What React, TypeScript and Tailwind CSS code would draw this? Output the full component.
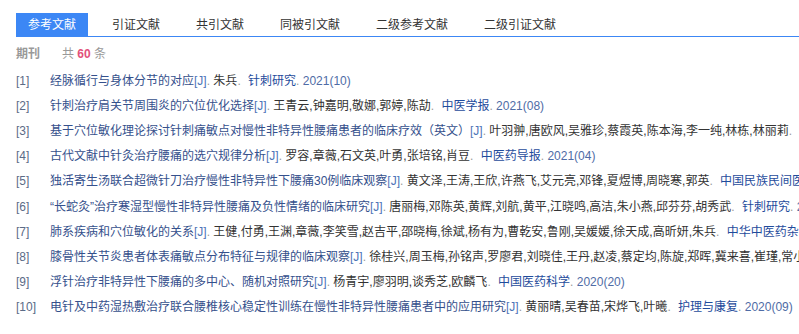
import React from "react";

type Ref = {
  title: string;
  authors: string;
  journal?: string;
  year?: string;
};

const refs: Ref[] = [
  { title: "经脉循行与身体分节的对应", authors: "朱兵", journal: "针刺研究", year: "2021(10)" },
  { title: "针刺治疗肩关节周围炎的穴位优化选择", authors: "王青云,钟嘉明,敬娜,郭婷,陈劼", journal: "中医学报", year: "2021(08)" },
  {
    title: "基于穴位敏化理论探讨针刺痛敏点对慢性非特异性腰痛患者的临床疗效（英文）",
    authors: "叶羽翀,唐欧风,吴雅珍,蔡霞英,陈本海,李一纯,林栋,林丽莉",
  },
  { title: "古代文献中针灸治疗腰痛的选穴规律分析", authors: "罗容,章薇,石文英,叶勇,张培铭,肖豆", journal: "中医药导报", year: "2021(04)" },
  {
    title: "独活寄生汤联合超微针刀治疗慢性非特异性下腰痛30例临床观察",
    authors: "黄文泽,王涛,王欣,许燕飞,艾元亮,邓锋,夏煜博,周晓寒,郭英",
    journal: "中国民族民间医药",
    year: "2021(07)",
  },
  {
    title: "“长蛇灸”治疗寒湿型慢性非特异性腰痛及负性情绪的临床研究",
    authors: "唐丽梅,邓陈英,黄辉,刘航,黄平,江晓鸣,高洁,朱小燕,邱芬芬,胡秀武",
    journal: "针刺研究",
    year: "2020(12)",
  },
  {
    title: "肺系疾病和穴位敏化的关系",
    authors: "王健,付勇,王渊,章薇,李笑雪,赵吉平,邵晓梅,徐斌,杨有为,曹乾安,鲁刚,吴媛媛,徐天成,高昕妍,朱兵",
    journal: "中华中医药杂志",
    year: "2020(11)",
  },
  {
    title: "膝骨性关节炎患者体表痛敏点分布特征与规律的临床观察",
    authors: "徐桂兴,周玉梅,孙铭声,罗廖君,刘晓佳,王丹,赵凌,蔡定均,陈旋,郑晖,冀来喜,崔瑾,常小荣",
    journal: "中华中医药杂志",
    year: "2020(11)",
  },
  { title: "浮针治疗非特异性下腰痛的多中心、随机对照研究", authors: "杨青宇,廖羽明,谈秀芝,欧麟飞", journal: "中国医药科学", year: "2020(20)" },
  {
    title: "电针及中药湿热敷治疗联合腰椎核心稳定性训练在慢性非特异性腰痛患者中的应用研究",
    authors: "黄丽晴,吴春苗,宋烨飞,叶曦",
    journal: "护理与康复",
    year: "2020(09)",
  },
];

const tabs = ["参考文献", "引证文献", "共引文献", "同被引文献", "二级参考文献", "二级引证文献"];

export default function App() {
  return (
    <div className="w-[799px] h-[334px] overflow-hidden bg-white pl-4 pt-[13px] text-[12px] text-[#333] font-['Liberation_Sans','Noto_Sans_CJK_SC',sans-serif]">
      {/* Tabs */}
      <div className="flex gap-3 border-b border-[#3c87f5]">
        {tabs.map((t, i) => (
          <div
            key={t}
            className={
              i === 0
                ? "h-[23px] px-3 flex items-center bg-[#3c87f5] text-white"
                : "h-[23px] px-3 flex items-center text-[#333]"
            }
          >
            {t}
          </div>
        ))}
      </div>

      {/* Count */}
      <div className="mt-[7px] h-5 flex items-center">
        <span className="font-bold text-[#999] w-[46px]">期刊</span>
        <span className="text-[#999]">
          共 <span className="font-bold text-[#e2517b]">60</span> 条
        </span>
      </div>

      {/* List */}
      <ul className="mt-[4px]">
        {refs.map((r, i) => (
          <li key={i} className="flex h-[25.2px] items-center whitespace-nowrap">
            <span className="w-[34px] shrink-0 text-[#5b6b87]">[{i + 1}]</span>
            <span className="text-[#35508c]">{r.title}</span>
            <span className="text-[#4e74b8]">[J]</span>
            <span className="text-[#999]">.&nbsp;</span>
            <span className="text-[#333]">{r.authors}</span>
            <span className="text-[#999]">.&nbsp;</span>
            {r.journal && (
              <>
                <span className="ml-[4px] text-[#1f4c9c]">{r.journal}</span>
                <span className="text-[#999]">.&nbsp;</span>
                <span className="text-[#4f6ca6]">{r.year}</span>
              </>
            )}
          </li>
        ))}
      </ul>
    </div>
  );
}
